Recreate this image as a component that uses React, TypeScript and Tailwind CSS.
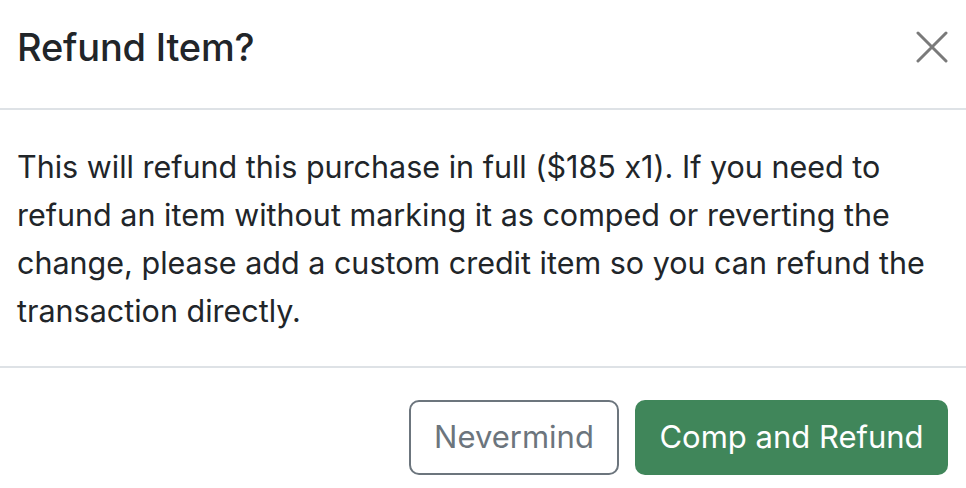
import React from 'react';

const font = { fontFamily: 'Inter, "Noto Sans", sans-serif', fontFeatureSettings: '"calt" 0' };

export default function App() {
  return (
    <div className="w-[966px] h-[488px] bg-white text-[#212529] flex flex-col" style={font}>
      {/* Header */}
      <div className="h-[110px] flex items-center justify-between pl-[17px] pr-[18px] pb-[14px] border-b-2 border-[#dee2e6]">
        <h2 className="text-[38px] font-medium leading-none tracking-[-0.2px]">Refund Item?</h2>
        <button className="w-[32px] h-[32px] flex items-center justify-center">
          <svg width="32" height="32" viewBox="0 0 32 32" fill="none" stroke="#7a7a7a" strokeWidth="3" strokeLinecap="round">
            <path d="M2 2 L30 30 M30 2 L2 30" />
          </svg>
        </button>
      </div>

      {/* Body */}
      <div className="px-[17px] pt-[33px] pb-[31px] border-b-2 border-[#dee2e6]">
        <p className="text-[30.5px] leading-[48px]">
          This will refund this purchase in full ($185 x1). If you need to refund an item without marking it as comped or
          reverting the change, please add a custom credit item so you can refund the transaction directly.
        </p>
      </div>

      {/* Footer */}
      <div className="flex justify-end gap-[16px] pr-[18px] pt-[32px]">
        <button className="w-[210px] h-[75px] rounded-[10px] border-2 border-[#6c757d] text-[#6c757d] text-[31px] flex items-center justify-center">
          Nevermind
        </button>
        <button className="w-[313px] h-[75px] rounded-[10px] bg-[#40865a] text-white text-[31px] flex items-center justify-center">
          Comp and Refund
        </button>
      </div>
    </div>
  );
}
